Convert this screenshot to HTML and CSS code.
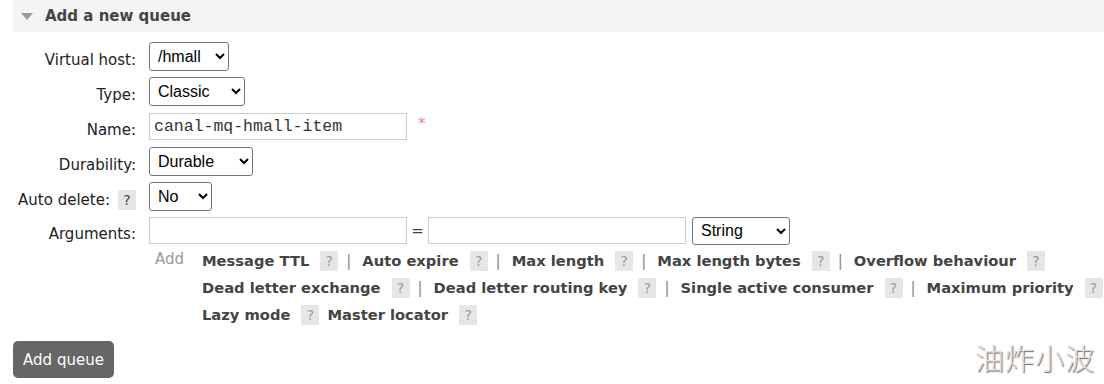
FILE: index.html
```html
<!DOCTYPE html>
<html>
<head>
<meta charset="utf-8">
<link rel="stylesheet" href="styles.css">
</head>
<body>
<div class="page">
  <div class="section-head">
    <span class="tri"></span>
    <span class="section-title">Add a new queue</span>
  </div>
  <div class="form">
    <div class="row">
      <label class="lbl">Virtual host:</label>
      <div class="ctl"><select class="sel w-vhost"><option>/hmall</option></select></div>
    </div>
    <div class="row">
      <label class="lbl">Type:</label>
      <div class="ctl"><select class="sel w-type"><option>Classic</option></select></div>
    </div>
    <div class="row">
      <label class="lbl">Name:</label>
      <div class="ctl"><input class="txt mono" value="canal-mq-hmall-item"><span class="req">*</span></div>
    </div>
    <div class="row">
      <label class="lbl">Durability:</label>
      <div class="ctl"><select class="sel w-dur"><option>Durable</option></select></div>
    </div>
    <div class="row">
      <label class="lbl">Auto delete: <span class="help">?</span></label>
      <div class="ctl"><select class="sel w-no"><option>No</option></select></div>
    </div>
    <div class="row row-args">
      <label class="lbl">Arguments:</label>
      <div class="ctl"><input class="txt"><span class="eq">=</span><input class="txt"><select class="sel w-str"><option>String</option></select></div>
    </div>
    <div class="add-row">
      <span class="add">Add</span>
      <div class="args">
        <div class="arg-line"><b>Message TTL</b><span class="help">?</span><span class="sep">|</span><b>Auto expire</b><span class="help">?</span><span class="sep">|</span><b>Max length</b><span class="help">?</span><span class="sep">|</span><b>Max length bytes</b><span class="help">?</span><span class="sep">|</span><b>Overflow behaviour</b><span class="help">?</span></div>
        <div class="arg-line"><b>Dead letter exchange</b><span class="help">?</span><span class="sep">|</span><b>Dead letter routing key</b><span class="help">?</span><span class="sep">|</span><b>Single active consumer</b><span class="help">?</span><span class="sep">|</span><b>Maximum priority</b><span class="help">?</span></div>
        <div class="arg-line"><b>Lazy mode</b><span class="help">?</span><b>Master locator</b><span class="help">?</span></div>
      </div>
    </div>
  </div>
  <button class="btn">Add queue</button>
</div>
<div class="watermark">油炸小波</div>
</body>
</html>
```
FILE: styles.css
```css
html, body {
  margin: 0;
  padding: 0;
  background: #fff;
  overflow: hidden;
}
body {
  font-family: "DejaVu Sans", Verdana, sans-serif;
  font-size: 15px;
  color: #333;
  width: 1104px;
  height: 384px;
  position: relative;
}
.page {
  padding-left: 13px;
}
.section-head {
  height: 32px;
  background: #f4f4f4;
  display: flex;
  align-items: center;
  padding-left: 8px;
}
.tri {
  width: 0;
  height: 0;
  border-left: 6px solid transparent;
  border-right: 6px solid transparent;
  border-top: 7px solid #9a9a9a;
  margin-right: 12px;
  margin-top: 1px;
}
.section-title {
  font-weight: bold;
  font-size: 15px;
  color: #444;
}
.form {
  padding-top: 7px;
}
.row {
  display: flex;
  align-items: center;
  height: 35px;
}
.row-args {
  height: 33px;
}
.lbl {
  width: 123px;
  text-align: right;
  color: #222;
  display: flex;
  justify-content: flex-end;
  align-items: center;
  gap: 8px;
  white-space: nowrap;
  padding-top: 7px;
}
.ctl {
  margin-left: 13px;
  display: flex;
  align-items: center;
}
.sel {
  font-family: "Liberation Sans", Arial, sans-serif;
  font-size: 16px;
  height: 29px;
  border: 1px solid #767676;
  border-radius: 3px;
  background: #fff;
  color: #000;
  padding: 0 4px;
}
.w-vhost { width: 80px; }
.w-type { width: 96px; }
.w-dur { width: 104px; }
.w-no { width: 63px; }
.w-str { width: 98px; margin-left: 6px; height: 28px; }
.txt {
  width: 258px;
  height: 27px;
  box-sizing: border-box;
  border: 1px solid #ccc;
  padding: 0 4px;
  margin: 0;
  font-size: 15px;
}
.mono {
  font-family: "Liberation Mono", "Courier New", monospace;
  font-size: 16.5px;
  color: #333;
}
.req {
  color: #e88;
  margin-left: 11px;
  font-size: 15px;
  align-self: flex-start;
  margin-top: 2px;
}
.eq {
  width: 21px;
  text-align: center;
  color: #444;
}
.help {
  display: inline-block;
  background: #e6e6e6;
  color: #999;
  width: 18px;
  height: 20px;
  line-height: 20px;
  text-align: center;
  font-weight: normal;
  font-size: 14px;
  flex: none;
}
.lbl .help {
  color: #444;
}
.add-row {
  display: flex;
  padding-left: 142px;
  padding-top: 0;
}
.add {
  color: #999;
  width: 47px;
  line-height: 24px;
  flex: none;
}
.args {
  display: flex;
  flex-direction: column;
}
.arg-line {
  display: flex;
  align-items: center;
  height: 27px;
  white-space: nowrap;
}
.arg-line b {
  color: #444;
  margin-right: 11px;
  font-size: 14.7px;
}
.arg-line .help {
  margin-right: 8px;
}
.sep {
  color: #888;
  margin-right: 11px;
}
.btn {
  margin-top: 13px;
  background: #666;
  color: #fff;
  border: none;
  border-radius: 5px;
  height: 37px;
  width: 101px;
  font-family: "DejaVu Sans", Verdana, sans-serif;
  font-size: 15px;
  padding: 0;
}
.watermark {
  position: absolute;
  right: 9px;
  bottom: 6px;
  font-family: "Noto Sans CJK SC", sans-serif;
  font-size: 29px;
  font-weight: 300;
  color: #e0e0e0;
  text-shadow: 1px 1px 1px #666;
  letter-spacing: 1px;
}
```
